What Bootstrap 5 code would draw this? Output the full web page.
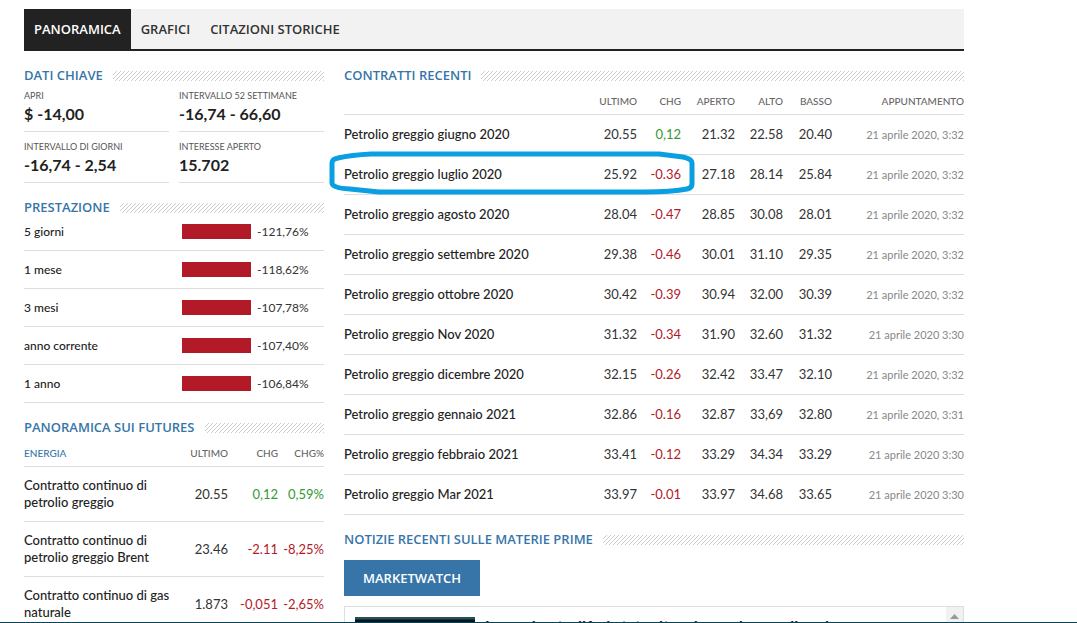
<!DOCTYPE html>
<html lang="it">
<head>
<meta charset="utf-8">
<meta name="viewport" content="width=device-width, initial-scale=1">
<title>Petrolio greggio - Panoramica</title>
<link href="https://cdn.jsdelivr.net/npm/bootstrap@5.3.0/dist/css/bootstrap.min.css" rel="stylesheet">
<style>
  :root { --mw-blue: #3775a9; --mw-ink: #222; --mw-rule: #dedede; --mw-red: #b21a28; --mw-green: #339933; }
  body { font-family: Lato, "Liberation Sans", sans-serif; font-size: 13px; line-height: 17px; color: var(--mw-ink); }
  .viewport-frame { height: 100vh; overflow: hidden; border-bottom: 1px solid #0d4257; }
  .page-wrap { max-width: 988px; padding: 9px 24px 0; }
  .quote-tabs { background: #f2f2f2; border-bottom: 2px solid var(--mw-ink); font: 600 13px/40px "Open Sans", sans-serif; }
  .quote-tabs .nav-link { padding: 0 10px; color: #333; }
  .quote-tabs .nav-link.active { background: var(--mw-ink); color: #fff; }
  .quote-grid { display: grid; grid-template-columns: 300px minmax(0, 1fr); column-gap: 20px; padding-top: 15px; }
  .later-section { padding-top: 15px; }
  .section-title { display: flex; align-items: center; gap: 10px; margin: 0; font: 600 13px/18px "Open Sans", sans-serif; color: var(--mw-blue); white-space: nowrap; }
  .section-title::after { content: ""; flex: 1; height: 10px; margin-top: 2px; background: linear-gradient(135deg, #fff 0 38%, #ccc 38% 62%, #fff 62%) 0 0 / 4px 4px; }
  .key-grid { display: grid; grid-template-columns: 1fr 1fr; gap: 0 10px; margin: 0; }
  .key-grid > div { height: 51px; padding-top: 6px; border-bottom: 1px solid var(--mw-rule); }
  .key-grid > div:nth-child(-n+2) { height: 48px; padding-top: 3px; }
  .key-grid dt { font-size: 9px; font-weight: 400; line-height: 17px; color: #555; }
  .key-grid dd { margin: 0; font-size: 16px; font-weight: 700; line-height: 20px; }
  .data-table { width: 100%; table-layout: fixed; border-collapse: collapse; }
  .data-table tr { border-bottom: 1px solid var(--mw-rule); }
  .data-table th, .data-table td { padding: 0; text-align: right; white-space: nowrap; }
  .data-table tbody th { text-align: left; font-weight: 500; white-space: normal; }
  .data-table tbody td { color: #333; }
  .data-table thead th { padding-bottom: 4px; vertical-align: bottom; font-size: 10px; font-weight: 500; color: #666; }
  .data-table thead .col-first { text-align: left; color: var(--mw-blue); }
  .perf-table { font-size: 12px; }
  .perf-table tr { height: 38px; }
  .perf-table tr:first-child { height: 34px; }
  .perf-table tr:first-child > * { padding-bottom: 3px; }
  .perf-cell { display: flex; align-items: center; gap: 6px; }
  .perf-bar { height: 15px; background: var(--mw-red); }
  .contracts thead tr { height: 30px; }
  .futures thead tr { height: 31px; }
  .contracts tbody tr { height: 40px; }
  .contracts tbody td:last-child { font-size: 11px; color: #888; }
  .futures tbody tr { height: 55px; }
  .data-table tbody .up { color: var(--mw-green); }
  .data-table tbody .down { color: var(--mw-red); }
  .circled { position: relative; }
  .circle-mark { position: absolute; left: -15px; top: -4px; width: 367px; height: 44px; pointer-events: none; }
  .source-tab { padding: 0 19px; border: 0; background: var(--mw-blue); color: #fff; font: 600 13px/36px "Open Sans", sans-serif; }
  .news-box { display: flex; height: 160px; margin-top: 10px; border: 1px solid var(--mw-rule); }
  .news-thumb { width: 120px; height: 80px; margin: 10px 0 0 10px; background: linear-gradient(#285057 0 2px, #061719 3px); }
  .news-title { flex: 1; margin: 9px 0 0 10px; font-size: 16px; font-weight: 700; line-height: 20px; }
  .news-scroll { width: 17px; padding: 7px 4px; background: #f1f1f1; }
</style>
</head>
<body>
<div class="viewport-frame">
<main class="page-wrap">
  <nav class="quote-tabs nav" aria-label="Sezioni">
    <a class="nav-link active" href="#" aria-current="page">PANORAMICA</a>
    <a class="nav-link" href="#">GRAFICI</a>
    <a class="nav-link" href="#">CITAZIONI STORICHE</a>
  </nav>
  <div class="quote-grid">
    <div>
      <section>
        <h2 class="section-title">DATI CHIAVE</h2>
        <dl class="key-grid">
          <div><dt>APRI</dt><dd>$ -14,00</dd></div>
          <div><dt>INTERVALLO 52 SETTIMANE</dt><dd>-16,74 - 66,60</dd></div>
          <div><dt>INTERVALLO DI GIORNI</dt><dd>-16,74 - 2,54</dd></div>
          <div><dt>INTERESSE APERTO</dt><dd>15.702</dd></div>
        </dl>
      </section>
      <section class="later-section">
        <h2 class="section-title">PRESTAZIONE</h2>
        <table class="data-table perf-table">
          <colgroup><col><col width="142"></colgroup>
          <tbody>
            <tr><th scope="row">5 giorni</th><td><div class="perf-cell"><span class="perf-bar" style="width:69px"></span>-121,76%</div></td></tr>
            <tr><th scope="row">1 mese</th><td><div class="perf-cell"><span class="perf-bar" style="width:69px"></span>-118,62%</div></td></tr>
            <tr><th scope="row">3 mesi</th><td><div class="perf-cell"><span class="perf-bar" style="width:69px"></span>-107,78%</div></td></tr>
            <tr><th scope="row">anno corrente</th><td><div class="perf-cell"><span class="perf-bar" style="width:69px"></span>-107,40%</div></td></tr>
            <tr><th scope="row">1 anno</th><td><div class="perf-cell"><span class="perf-bar" style="width:69px"></span>-106,84%</div></td></tr>
          </tbody>
        </table>
      </section>
      <section class="later-section">
        <h2 class="section-title">PANORAMICA SUI FUTURES</h2>
        <table class="data-table futures">
          <colgroup><col><col width="50"><col width="50"><col width="46"></colgroup>
          <thead><tr><th scope="col" class="col-first">ENERGIA</th><th scope="col">ULTIMO</th><th scope="col">CHG</th><th scope="col">CHG%</th></tr></thead>
          <tbody>
            <tr><th scope="row">Contratto continuo di<br>petrolio greggio</th><td>20.55</td><td class="up">0,12</td><td class="up">0,59%</td></tr>
            <tr><th scope="row">Contratto continuo di<br>petrolio greggio Brent</th><td>23.46</td><td class="down">-2.11</td><td class="down">-8,25%</td></tr>
            <tr><th scope="row">Contratto continuo di gas<br>naturale</th><td>1.873</td><td class="down">-0,051</td><td class="down">-2,65%</td></tr>
          </tbody>
        </table>
      </section>
    </div>
    <div>
      <section>
        <h2 class="section-title">CONTRATTI RECENTI</h2>
        <table class="data-table contracts">
          <colgroup><col><col width="50"><col width="44"><col width="54"><col width="48"><col width="49"><col width="132"></colgroup>
          <thead><tr><td></td><th scope="col">ULTIMO</th><th scope="col">CHG</th><th scope="col">APERTO</th><th scope="col">ALTO</th><th scope="col">BASSO</th><th scope="col">APPUNTAMENTO</th></tr></thead>
          <tbody>
            <tr><th scope="row">Petrolio greggio giugno 2020</th><td>20.55</td><td class="up">0,12</td><td>21.32</td><td>22.58</td><td>20.40</td><td>21 aprile 2020, 3:32</td></tr>
            <tr><th scope="row" class="circled">Petrolio greggio luglio 2020
              <svg class="circle-mark" viewBox="0 0 367 44" fill="none" stroke="#0a9fe0" stroke-width="5" stroke-linejoin="round" aria-hidden="true"><path d="M3 12Q3 8 9 7Q22 4 42 3H330L354 6Q363 8 363 12V33Q363 37 358 38Q343 41 315 41H50L21 38Q3 37 3 32Z"/></svg></th><td>25.92</td><td class="down">-0.36</td><td>27.18</td><td>28.14</td><td>25.84</td><td>21 aprile 2020, 3:32</td></tr>
            <tr><th scope="row">Petrolio greggio agosto 2020</th><td>28.04</td><td class="down">-0.47</td><td>28.85</td><td>30.08</td><td>28.01</td><td>21 aprile 2020, 3:32</td></tr>
            <tr><th scope="row">Petrolio greggio settembre 2020</th><td>29.38</td><td class="down">-0.46</td><td>30.01</td><td>31.10</td><td>29.35</td><td>21 aprile 2020, 3:32</td></tr>
            <tr><th scope="row">Petrolio greggio ottobre 2020</th><td>30.42</td><td class="down">-0.39</td><td>30.94</td><td>32.00</td><td>30.39</td><td>21 aprile 2020, 3:32</td></tr>
            <tr><th scope="row">Petrolio greggio Nov 2020</th><td>31.32</td><td class="down">-0.34</td><td>31.90</td><td>32.60</td><td>31.32</td><td>21 aprile 2020 3:30</td></tr>
            <tr><th scope="row">Petrolio greggio dicembre 2020</th><td>32.15</td><td class="down">-0.26</td><td>32.42</td><td>33.47</td><td>32.10</td><td>21 aprile 2020, 3:32</td></tr>
            <tr><th scope="row">Petrolio greggio gennaio 2021</th><td>32.86</td><td class="down">-0.16</td><td>32.87</td><td>33,69</td><td>32.80</td><td>21 aprile 2020, 3:31</td></tr>
            <tr><th scope="row">Petrolio greggio febbraio 2021</th><td>33.41</td><td class="down">-0.12</td><td>33.29</td><td>34.34</td><td>33.29</td><td>21 aprile 2020 3:30</td></tr>
            <tr><th scope="row">Petrolio greggio Mar 2021</th><td>33.97</td><td class="down">-0.01</td><td>33.97</td><td>34.68</td><td>33.65</td><td>21 aprile 2020 3:30</td></tr>
          </tbody>
        </table>
      </section>
      <section class="later-section">
        <h2 class="section-title mb-2 pb-1">NOTIZIE RECENTI SULLE MATERIE PRIME</h2>
        <button type="button" class="source-tab">MARKETWATCH</button>
        <div class="news-box">
          <div class="news-thumb"></div>
          <h3 class="news-title">I prezzi petroliferi statunitensi scendono sulla scia</h3>
          <div class="news-scroll"><svg width="9" height="5" viewBox="0 0 9 5" class="d-block" aria-hidden="true"><path d="M0 5L4.500 0L9 5Z" fill="#999"/></svg></div>
        </div>
      </section>
    </div>
  </div>
</main>
</div>
<script src="https://cdn.jsdelivr.net/npm/bootstrap@5.3.0/dist/js/bootstrap.bundle.min.js"></script>
</body>
</html>
